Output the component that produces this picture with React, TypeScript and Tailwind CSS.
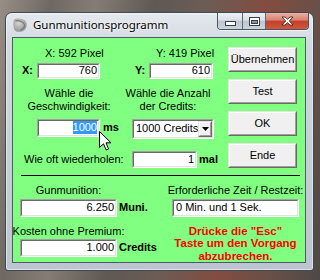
import React from "react";

function Field({
  className,
  children,
  align = "right",
}: {
  className: string;
  children?: React.ReactNode;
  align?: "left" | "right";
}) {
  return (
    <div
      className={`border border-t-[#a0a0a0] border-l-[#a0a0a0] border-b-white border-r-white ${className}`}
    >
      <div
        className={`flex h-full w-full items-center overflow-hidden whitespace-nowrap border border-t-[#696969] border-l-[#696969] border-b-[#e3e3e3] border-r-[#e3e3e3] bg-white ${
          align === "right" ? "justify-end pr-[1px]" : "justify-start pl-[1px]"
        }`}
      >
        {children}
      </div>
    </div>
  );
}

function Btn({ children }: { children: React.ReactNode }) {
  return (
    <div className="h-[25px] w-[69px] border border-t-[#e3e3e3] border-l-[#e3e3e3] border-b-[#696969] border-r-[#696969]">
      <div className="flex h-full w-full items-center justify-center border border-t-white border-l-white border-b-[#a0a0a0] border-r-[#a0a0a0] bg-[#f0f0f0]">
        {children}
      </div>
    </div>
  );
}

function AppIcon() {
  return (
    <svg width="16" height="16" viewBox="0 0 16 16">
      <defs>
        <radialGradient id="ig" cx="0.4" cy="0.35" r="0.7">
          <stop offset="0" stopColor="#d4d4d4" />
          <stop offset="1" stopColor="#8e8e8e" />
        </radialGradient>
      </defs>
      <path d="M2 2.5 C5 1 11 1 14 5 C15.5 8 14.5 12 11 14 C8 15.5 4 15 2.5 13 C1 10 1 5 2 2.5 Z" fill="url(#ig)" />
      <path d="M3.5 4 C7 3 11 4.5 12.5 7.5 C13 10 11 12.5 8 13" fill="none" stroke="#7a7a7a" strokeWidth="1.2" />
    </svg>
  );
}

export default function App() {
  return (
    <div className="relative h-[280px] w-[320px] overflow-hidden bg-[linear-gradient(100deg,#978f86_0%,#6f6862_14%,#857d75_26%,#5f5853_42%,#6c5c55_56%,#834c40_72%,#6a5048_86%,#4d4946_100%)] pl-[5px] pt-[12px] font-['Liberation_Sans',Arial,sans-serif] text-[11px] leading-[13px] text-black">
      {/* window */}
      <div className="flex h-[259px] w-[309px] flex-col rounded-t-[7px] rounded-b-[3px] border border-[#3e4956] bg-[linear-gradient(180deg,#e4e9ee_0%,#d2d9e0_12%,#c6ced7_55%,#bcc5cf_100%)] pb-[7px] pl-[6px] pr-[7px] shadow-[inset_0_0_0_1px_rgba(255,255,255,0.5)]">
        {/* title bar */}
        <div className="flex h-[25px] items-start">
          <div className="flex h-full items-center gap-[5px]">
            <AppIcon />
            <span className="font-['Noto_Sans','Open_Sans',sans-serif] text-[11.5px] leading-[14px] text-black [text-shadow:0_0_5px_rgba(255,255,255,0.95),0_0_2px_rgba(255,255,255,0.9)]">
              Gunmunitionsprogramm
            </span>
          </div>
          <div className="ml-auto mr-[-3px] flex h-[17px] overflow-hidden rounded-b-[4px] border border-t-0 border-[#4a5562] shadow-[0_1px_0_rgba(255,255,255,0.6)]">
            <div className="flex w-[25px] items-end justify-center border-r border-[#5d6875] bg-[linear-gradient(180deg,#eef1f4_0%,#dbe0e6_45%,#bdc6d0_50%,#cbd3db_100%)] pb-[3px]">
              <svg width="11" height="5" viewBox="0 0 11 5">
                <rect x="0.5" y="0.5" width="10" height="4" fill="#ffffff" stroke="#3a4048" />
              </svg>
            </div>
            <div className="flex w-[23px] items-center justify-center border-r border-[#5d6875] bg-[linear-gradient(180deg,#eef1f4_0%,#dbe0e6_45%,#bdc6d0_50%,#cbd3db_100%)]">
              <svg width="11" height="9" viewBox="0 0 11 9">
                <rect x="0.5" y="0.5" width="10" height="8" fill="#ffffff" stroke="#3a4048" />
                <rect x="2.5" y="3.5" width="6" height="3" fill="#8c96a2" stroke="#3a4048" />
              </svg>
            </div>
            <div className="flex w-[42px] items-center justify-center bg-[linear-gradient(180deg,#eab0a4_0%,#d8816f_45%,#c2412a_50%,#d0563c_100%)]">
              <svg width="13" height="10" viewBox="0 0 13 10">
                <path
                  d="M1 1 L4 1 L6.5 3.3 L9 1 L12 1 L8.3 5 L12 9 L9 9 L6.5 6.7 L4 9 L1 9 L4.7 5 Z"
                  fill="#ffffff"
                  stroke="#4a2520"
                  strokeWidth="0.9"
                  strokeLinejoin="round"
                />
              </svg>
            </div>
          </div>
        </div>

        {/* client area */}
        <div className="flex-1 border border-[#4e5a67] bg-[#80ff80]">
          {/* top section */}
          <div className="flex pt-[9px]">
            <div className="flex w-[215px] flex-col">
              {/* row 1 */}
              <div className="flex h-[13px] whitespace-nowrap">
                <div className="w-[112px] pl-[32px]">X: 592 Pixel</div>
                <div className="pl-[31px]">Y: 419 Pixel</div>
              </div>
              {/* row 2 */}
              <div className="mt-[3px] flex h-[16px] items-center">
                <div className="flex w-[112px] items-center pl-[9px]">
                  <span className="w-[15px] font-bold">X:</span>
                  <Field className="h-[16px] w-[63px]">760</Field>
                </div>
                <div className="flex items-center pl-[10px]">
                  <span className="w-[14px] font-bold">Y:</span>
                  <Field className="h-[16px] w-[64px]">610</Field>
                </div>
              </div>
              {/* row 3 */}
              <div className="mt-[8px] flex whitespace-nowrap">
                <div className="flex w-[112px] flex-col items-center">
                  <span>Wähle die</span>
                  <span>Geschwindigkeit:</span>
                </div>
                <div className="flex w-[86px] flex-col items-center">
                  <span>Wähle die Anzahl</span>
                  <span>der Credits:</span>
                </div>
              </div>
              {/* row 4 */}
              <div className="mt-[6px] flex h-[20px] items-start">
                <div className="flex h-[18px] w-[112px] items-center pl-[24px]">
                  <Field className="h-[18px] w-[63px]">
                    <span className="bg-[#3399ff] text-white">1000</span>
                  </Field>
                  <span className="ml-[3px] font-bold">ms</span>
                </div>
                <div className="pl-[7px]">
                  <Field className="h-[20px] w-[82px]" align="left">
                    <span className="min-w-0 flex-1 overflow-hidden whitespace-nowrap pl-[1px]">1000 Credits</span>
                    <div className="h-full w-[14px] shrink-0 border border-t-[#e3e3e3] border-l-[#e3e3e3] border-b-[#696969] border-r-[#696969]">
                      <div className="flex h-full w-full items-center justify-center border border-t-white border-l-white border-b-[#a0a0a0] border-r-[#a0a0a0] bg-[#f0f0f0]">
                        <svg width="7" height="4" viewBox="0 0 7 4">
                          <path d="M0 0 L7 0 L3.5 4 Z" fill="#000" />
                        </svg>
                      </div>
                    </div>
                  </Field>
                </div>
              </div>
              {/* row 5 */}
              <div className="mt-[12px] flex h-[17px] items-center">
                <div className="w-[112px] whitespace-nowrap pl-[11px]">Wie oft wiederholen:</div>
                <div className="flex items-center pl-[7px]">
                  <Field className="h-[17px] w-[65px]">1</Field>
                  <span className="ml-[2px] font-bold">mal</span>
                </div>
              </div>
            </div>

            {/* buttons */}
            <div className="flex w-[69px] flex-col gap-[7px]">
              <Btn>Übernehmen</Btn>
              <Btn>Test</Btn>
              <Btn>OK</Btn>
              <Btn>Ende</Btn>
            </div>
          </div>

          {/* divider */}
          <div className="ml-[8px] mt-[7px] h-[1px] w-[279px] bg-black" />

          {/* bottom section */}
          <div className="flex pl-[7px]">
            <div className="flex w-[152px] flex-col">
              <div className="mt-[8px] flex h-[13px] w-[97px] justify-center whitespace-nowrap">Gunmunition:</div>
              <div className="mt-[2px] flex items-center">
                <Field className="h-[18px] w-[97px]">6.250</Field>
                <span className="ml-[2px] font-bold">Muni.</span>
              </div>
              <div className="mt-[8px] flex h-[13px] w-[97px] justify-center whitespace-nowrap">Kosten ohne Premium:</div>
              <div className="mt-[1px] flex items-center">
                <Field className="h-[18px] w-[97px]">1.000</Field>
                <span className="ml-[2px] font-bold">Credits</span>
              </div>
            </div>
            <div className="flex w-[127px] flex-col">
              <div className="mt-[8px] flex h-[13px] justify-center whitespace-nowrap">Erforderliche Zeit / Restzeit:</div>
              <div className="mt-[2px]">
                <Field className="h-[18px] w-[127px]" align="left">
                  <span className="pl-[1px]">0 Min. und 1 Sek.</span>
                </Field>
              </div>
              <div className="mt-[8px] flex flex-col items-center whitespace-nowrap text-[11.5px] font-bold leading-[12.5px] text-[#ff0000]">
                <span className="h-[12.5px]">Drücke die "Esc"</span>
                <span className="h-[12.5px]">Taste um den Vorgang</span>
                <span className="h-[12.5px]">abzubrechen.</span>
              </div>
            </div>
          </div>
        </div>
      </div>

      {/* mouse cursor */}
      <svg className="absolute left-[99px] top-[131px]" width="13" height="20" viewBox="0 0 13 20">
        <path
          d="M0.5 0.5 L0.5 16.5 L4.5 12.8 L7.2 19 L9.6 18 L7 11.8 L12 11.8 Z"
          fill="#ffffff"
          stroke="#000000"
          strokeWidth="1"
          strokeLinejoin="miter"
        />
      </svg>
    </div>
  );
}
